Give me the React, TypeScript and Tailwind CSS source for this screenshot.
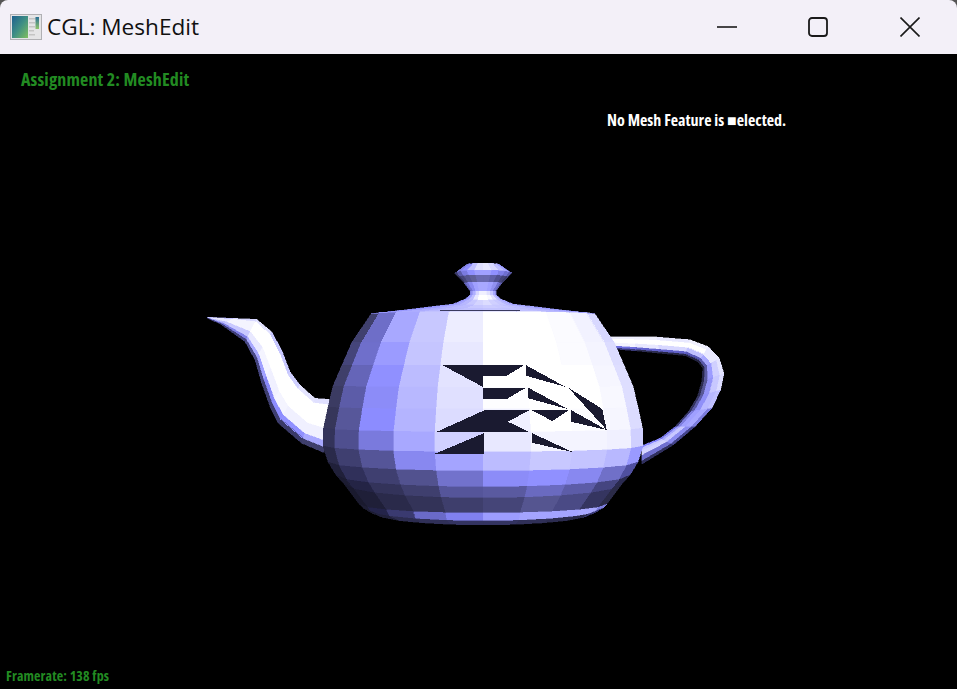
import React from "react";

type P = [number, number];
const pts = (a: P[]) => a.map(([x, y]) => `${x.toFixed(1)},${y.toFixed(1)}`).join(" ");

const ANG = [-90, -68, -51, -34, -17.5, 0, 17.5, 34, 51, 68, 90];
type Ring = [number, number, number];
const pos = (ring: Ring, a: number): P => {
  const t = (a * Math.PI) / 180;
  return [483 + ring[1] * Math.sin(t), ring[0] - ring[2] * (1 - Math.cos(t))];
};

function Revolve({ rings, colors }: { rings: Ring[]; colors: string[][] }) {
  const out: React.ReactNode[] = [];
  for (let r = 0; r < rings.length - 1; r++) {
    for (let c = 0; c < ANG.length - 1; c++) {
      out.push(
        <polygon
          key={`${r}-${c}`}
          points={pts([pos(rings[r], ANG[c]), pos(rings[r], ANG[c + 1]), pos(rings[r + 1], ANG[c + 1]), pos(rings[r + 1], ANG[c])])}
          fill={colors[r][c]}
          stroke={colors[r][c]}
          strokeWidth={0.4}
        />
      );
    }
  }
  return <>{out}</>;
}

function Tube({ st, fr, colors, map }: { st: [P, P][]; fr: number[]; colors: string[][]; map: (p: P) => P }) {
  const out: React.ReactNode[] = [];
  const lerp = (a: P, b: P, t: number): P => [a[0] + (b[0] - a[0]) * t, a[1] + (b[1] - a[1]) * t];
  for (let i = 0; i < st.length - 1; i++) {
    for (let b = 0; b < fr.length - 1; b++) {
      const q = [lerp(st[i][0], st[i][1], fr[b]), lerp(st[i + 1][0], st[i + 1][1], fr[b]), lerp(st[i + 1][0], st[i + 1][1], fr[b + 1]), lerp(st[i][0], st[i][1], fr[b + 1])].map(map);
      out.push(<polygon key={`${i}-${b}`} points={pts(q)} fill={colors[i][b]} stroke={colors[i][b]} strokeWidth={0.4} />);
    }
  }
  return <>{out}</>;
}

const BODY_RINGS: Ring[] = [
  [310, 112, -4], [342, 131, 0], [365, 141, 0], [387, 150, 1], [409, 155, 2], [432, 159.5, 4],
  [452, 160, 6], [471, 155, 9], [487, 147, 12], [498, 139, 14], [513, 124, 9], [521, 120, 13], [525, 108, 12],
];
const BODY: string[][] = [
  ["#40406e", "#6e6ec8", "#a8a8ff", "#c8c8ff", "#ededff", "#ffffff", "#ffffff", "#fbfbff", "#f2f2ff", "#d8d8ff"],
  ["#45457a", "#6f6fcb", "#9b9bff", "#c5c5ff", "#e8e8ff", "#ffffff", "#ffffff", "#fbfbff", "#f4f4ff", "#dcdcff"],
  ["#3f3f6a", "#6565b8", "#9090ff", "#bcbcff", "#e3e3ff", "#ffffff", "#ffffff", "#ffffff", "#f6f6ff", "#dedeff"],
  ["#3b3b62", "#5c5ca8", "#8c8cf8", "#b8b8ff", "#e0e0ff", "#fdfdff", "#ffffff", "#ffffff", "#f8f8ff", "#dedeff"],
  ["#36365a", "#57579a", "#8c8cff", "#b4b4ff", "#dcdcff", "#f0f0ff", "#ffffff", "#fcfcff", "#f6f6ff", "#dcdcff"],
  ["#33335a", "#4f4f8f", "#7a7add", "#a8a8ff", "#d0d0ff", "#e8e8ff", "#f4f4ff", "#f4f4ff", "#f0f0ff", "#d0d0ff"],
  ["#2a2a4a", "#3f3f70", "#555598", "#8888f0", "#a4a4ff", "#bcbcff", "#c8c8ff", "#c4c4ff", "#b8b8ff", "#9a9aff"],
  ["#20203a", "#30305a", "#3f3f70", "#52528f", "#7272cc", "#8c8cf8", "#9090ff", "#8888f0", "#7070c8", "#5050a0"],
  ["#1c1c32", "#242445", "#33335a", "#3f3f6e", "#55559a", "#5a5aa0", "#6a6ac0", "#5c5ca8", "#454580", "#2a2a50"],
  ["#1a1a2e", "#1f1f38", "#2a2a4a", "#333358", "#3e3e6c", "#454578", "#555590", "#4a4a85", "#353560", "#2b2b48"],
  ["#1e1e34", "#24244a", "#3a3a70", "#6a6ac8", "#8080ef", "#9c9cff", "#a4a4ff", "#a4a4ff", "#a8a8ff", "#7c7cdc"],
  ["#1c1c30", "#20203a", "#2c2c50", "#303058", "#333360", "#333360", "#303058", "#2c2c50", "#282848", "#3a3a78"],
];

const KNOB_RINGS: Ring[] = [
  [263, 17, -2], [270, 28.5, -3], [275, 25, -2], [282, 19, -1], [291, 13, 0], [295, 13, 0], [300, 18, 1], [305, 30, 1], [308, 55, 1], [311, 112, -3],
];
const KNOB: string[][] = [
  ["#7070c8", "#8080e0", "#9090ff", "#c0c0ff", "#e0e0ff", "#e8e8ff", "#d8d8ff", "#c0c0ff", "#a8a8ff", "#9090ff"],
  ["#3a3a68", "#5a5aa8", "#7a7ae0", "#9090ff", "#a0a0ff", "#a0a0ff", "#9090ff", "#8080e8", "#7070d0", "#5a5aa8"],
  ["#303058", "#444478", "#555590", "#606098", "#6a6ab0", "#6a6ab0", "#6060a8", "#505090", "#444478", "#3a3a68"],
  ["#5a5aa8", "#7070d0", "#8888f0", "#a0a0ff", "#a8a8ff", "#a8a8ff", "#a0a0ff", "#9090f0", "#7070d0", "#6060b0"],
  ["#7c7cd8", "#9090f0", "#b0b0ff", "#d8d8ff", "#f0f0ff", "#f0f0ff", "#e0e0ff", "#c8c8ff", "#a8a8ff", "#9090f0"],
  ["#8c8cf0", "#a0a0ff", "#c0c0ff", "#e8e8ff", "#ffffff", "#ffffff", "#f8f8ff", "#e0e0ff", "#c0c0ff", "#a0a0ff"],
  ["#9494f8", "#a8a8ff", "#b8b8ff", "#c8c8ff", "#d4d4ff", "#dcdcff", "#d0d0ff", "#c8c8ff", "#b8b8ff", "#a8a8ff"],
  ["#9898ff", "#a4a4ff", "#b4b4ff", "#bcbcff", "#c8c8ff", "#ccccff", "#c8c8ff", "#c0c0ff", "#b4b4ff", "#a4a4ff"],
  ["#9090ff", "#9c9cff", "#acacff", "#b8b8ff", "#c0c0ff", "#c4c4ff", "#c0c0ff", "#b8b8ff", "#acacff", "#9c9cff"],
];

const HANDLE_ST: [P, P][] = [
  [[28, 35], [42, 72]], [[100, 35], [110, 78]], [[170, 36], [180, 85]], [[270, 44], [255, 92]],
  [[325, 65], [295, 112]], [[358, 100], [308, 130]], [[372, 145], [305, 170]], [[362, 195], [292, 215]],
  [[335, 250], [265, 260]], [[285, 305], [225, 305]], [[220, 360], [180, 340]], [[125, 418], [125, 362]],
];
const HANDLE: string[][] = [
  ["#f0f0ff", "#ffffff", "#f4f4ff", "#7070e0", "#3a3a78"],
  ["#f0f0ff", "#ffffff", "#e8e8ff", "#6464d0", "#2c2c50"],
  ["#e8e8ff", "#ffffff", "#d8d8ff", "#6060c8", "#262644"],
  ["#f0f0ff", "#ffffff", "#c0c0ff", "#5858b8", "#222240"],
  ["#e8e8ff", "#e8e8ff", "#a8a8ff", "#5858a8", "#24243e"],
  ["#e4e4ff", "#d0d0ff", "#9c9cff", "#5a5aa0", "#26264a"],
  ["#dcdcff", "#c8c8ff", "#9494f8", "#585898", "#2c2c50"],
  ["#c0c0ff", "#b8b8ff", "#9090f8", "#5c5ca8", "#34345e"],
  ["#7c7cdc", "#a8a8ff", "#a0a0ff", "#8080e0", "#3a3a70"],
  ["#44448a", "#8c8cf0", "#c8c8ff", "#a8a8ff", "#7070e0"],
  ["#30305e", "#7070d0", "#d4d4ff", "#c8c8ff", "#8888ff"],
];

const SPOUT_ST: [P, P][] = [
  [[22, 22], [22, 24]], [[100, 25], [65, 45]], [[170, 28], [135, 95]], [[215, 65], [165, 150]],
  [[245, 120], [185, 220]], [[270, 185], [210, 290]], [[300, 225], [235, 340]], [[345, 265], [305, 400]], [[388, 268], [372, 428]],
];
const SPOUT: string[][] = [
  ["#b0b0ff", "#e8e8ff", "#c0c0ff", "#8080e8", "#40407a"],
  ["#d8d8ff", "#f4f4ff", "#c8c8ff", "#8080e8", "#40407a"],
  ["#e0e0ff", "#ffffff", "#e8e8ff", "#a8a8ff", "#4a4a88"],
  ["#c8c8ff", "#ffffff", "#f4f4ff", "#a0a0ff", "#44447e"],
  ["#c8c8ff", "#ffffff", "#f0f0ff", "#8888f8", "#3e3e70"],
  ["#d0d0ff", "#ffffff", "#f4f4ff", "#8c8cff", "#3e3e70"],
  ["#e4e4ff", "#ffffff", "#f0f0ff", "#9090ff", "#3a3a68"],
  ["#e0e0ff", "#ffffff", "#f0f0ff", "#a8a8ff", "#3e3e6c"],
];

const DECAL: P[][] = [
  [[52, 30], [298, 30], [245, 62], [174, 62], [174, 96]],
  [[174, 98], [303, 98], [245, 132], [174, 132]],
  [[302, 30], [420, 95], [302, 62]],
  [[310, 98], [428, 162], [310, 130]],
  [[430, 98], [532, 162], [545, 225]],
  [[438, 165], [545, 225], [438, 200]],
  [[36, 230], [180, 165], [315, 165], [248, 200], [315, 232]],
  [[318, 165], [432, 165], [382, 198]],
  [[30, 296], [176, 235], [176, 296]],
  [[320, 234], [445, 292], [320, 263]],
];

function Teapot() {
  return (
    <svg viewBox="0 54 957 635" width={957} height={635} shapeRendering="crispEdges" className="absolute inset-0">
      <Tube st={SPOUT_ST} fr={[0, 0.1, 0.55, 0.78, 0.9, 1]} colors={SPOUT} map={([u, v]) => [200 + u / 3, 310 + v / 3]} />
      <Tube st={HANDLE_ST} fr={[0, 0.2, 0.5, 0.75, 0.9, 1]} colors={HANDLE} map={([u, v]) => [600 + u / 3, 325 + v / 3]} />
      <Revolve rings={BODY_RINGS} colors={BODY} />
      <Revolve rings={KNOB_RINGS} colors={KNOB} />
      <line x1={440} y1={310} x2={520} y2={310} stroke="#3a3a60" strokeWidth={1} />
      {DECAL.map((d, i) => (
        <polygon key={i} points={pts(d.map(([u, v]) => [425 + u / 3, 355 + v / 3] as P))} fill="#1a1a30" />
      ))}
    </svg>
  );
}

function AppIcon() {
  return (
    <svg width={32} height={26} viewBox="0 0 32 26" className="shrink-0">
      <defs>
        <linearGradient id="pane" x1="0" y1="0" x2="1" y2="1">
          <stop offset="0" stopColor="#1d5f8f" />
          <stop offset="0.5" stopColor="#3f8f84" />
          <stop offset="1" stopColor="#7fbf5f" />
        </linearGradient>
        <linearGradient id="side" x1="0" y1="0" x2="0" y2="1">
          <stop offset="0" stopColor="#2a6f95" />
          <stop offset="1" stopColor="#8fc46a" />
        </linearGradient>
      </defs>
      <rect x={0.5} y={0.5} width={31} height={25} fill="#e4e4e6" stroke="#b0b0b4" />
      <rect x={2} y={2} width={16} height={22} fill="url(#pane)" />
      <rect x={19} y={4} width={7} height={1.5} fill="#c4c4c4" />
      <rect x={19} y={8} width={6} height={1.5} fill="#c4c4c4" />
      <rect x={19} y={12} width={6} height={1.5} fill="#c4c4c4" />
      <rect x={19} y={16} width={5} height={1.5} fill="#c4c4c4" />
      <rect x={19} y={20} width={6} height={1.5} fill="#c4c4c4" />
      <rect x={25.5} y={3} width={3.5} height={12} fill="url(#side)" />
    </svg>
  );
}

const condensed = "font-['Open_Sans',sans-serif] font-bold [font-stretch:75%] whitespace-nowrap";

export default function App() {
  return (
    <div className="w-[957px] h-[689px] bg-[#555555] flex flex-col overflow-hidden">
      <header className="h-[54px] shrink-0 bg-[#f3f0f8] rounded-t-lg flex items-center pl-[10px]">
        <AppIcon />
        <span className="ml-[5px] text-[22.6px] leading-none text-[#111] font-['Open_Sans',sans-serif]">CGL: MeshEdit</span>
        <div className="ml-auto flex items-center text-[#1a1a1a]">
          <button className="w-[91px] h-[54px] flex items-center justify-center">
            <svg width={20} height={20} viewBox="0 0 20 20"><path d="M0 10H20" stroke="currentColor" strokeWidth={1.6} fill="none" /></svg>
          </button>
          <button className="w-[92px] h-[54px] flex items-center justify-center">
            <svg width={20} height={20} viewBox="0 0 20 20"><rect x={1} y={1} width={18} height={18} rx={3} stroke="currentColor" strokeWidth={1.8} fill="none" /></svg>
          </button>
          <button className="w-[92px] h-[54px] mr-[1px] flex items-center justify-center">
            <svg width={20} height={20} viewBox="0 0 20 20"><path d="M0.5 0.5L19.5 19.5M19.5 0.5L0.5 19.5" stroke="currentColor" strokeWidth={1.6} fill="none" /></svg>
          </button>
        </div>
      </header>
      <main className="relative flex-1 bg-black flex flex-col pt-[13px] pb-[4px]">
        <Teapot />
        <div className={`relative pl-[21px] text-[18px] leading-[24px] tracking-[0.14px] text-[#228b22] ${condensed}`}>Assignment 2: MeshEdit</div>
        <div className={`relative pl-[607px] mt-[18px] text-[16px] leading-[22px] text-white ${condensed}`}>No Mesh Feature is ■elected.</div>
        <div className={`relative pl-[6px] mt-auto text-[14px] leading-[18px] tracking-[0.12px] text-[#228b22] ${condensed}`}>Framerate: 138 fps</div>
      </main>
    </div>
  );
}
